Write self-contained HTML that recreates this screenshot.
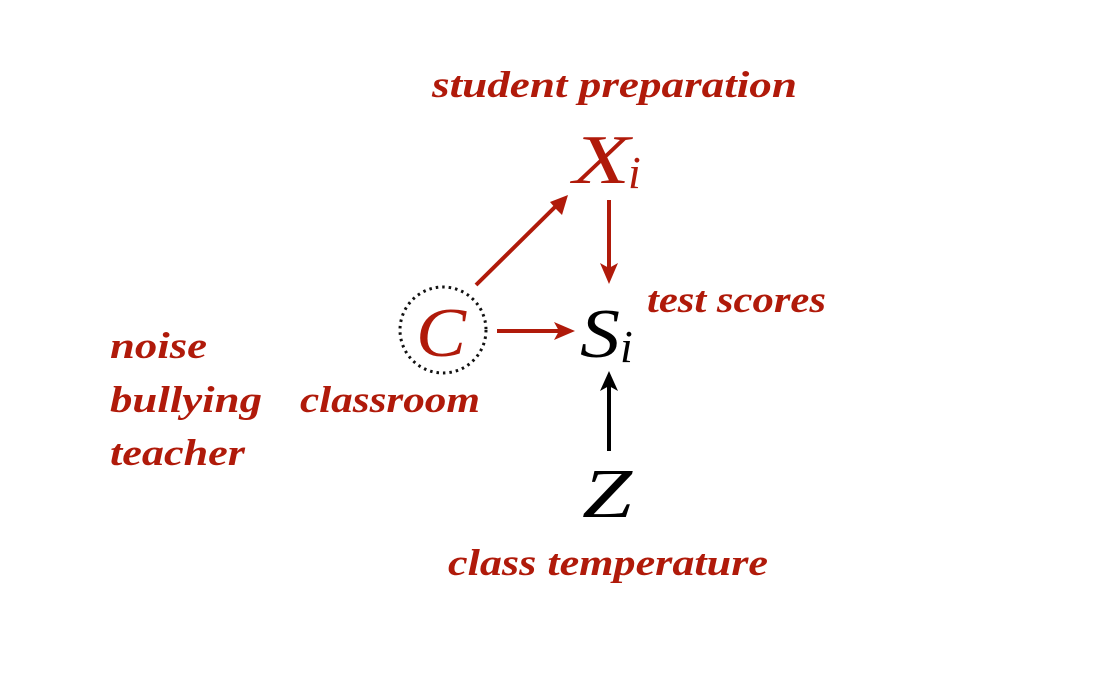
<!DOCTYPE html>
<html><head><meta charset="utf-8"><style>
html,body{margin:0;padding:0;background:#fff;}
svg{display:block;}
.l{font-family:"Liberation Serif",serif;font-style:italic;font-weight:bold;fill:#b01a0a;font-size:37px;}
.m{font-family:"Liberation Serif",serif;font-style:italic;font-size:70px;}
.s{font-family:"Liberation Serif",serif;font-style:italic;font-size:46px;}
</style></head><body>
<svg width="1104" height="689" viewBox="0 0 1104 689">
<text class="l" x="432" y="97" textLength="365" lengthAdjust="spacingAndGlyphs">student preparation</text>
<text class="m" x="573" y="183" fill="#b01a0a" textLength="57" lengthAdjust="spacingAndGlyphs">X</text><text class="s" x="628" y="188" fill="#b01a0a">i</text>
<text class="l" x="647" y="312" textLength="179" lengthAdjust="spacingAndGlyphs">test scores</text>
<text class="l" x="300" y="412" textLength="180" lengthAdjust="spacingAndGlyphs">classroom</text>
<text class="l" x="110" y="358" textLength="97" lengthAdjust="spacingAndGlyphs">noise</text>
<text class="l" x="110" y="412" textLength="152" lengthAdjust="spacingAndGlyphs">bullying</text>
<text class="l" x="110" y="465" textLength="135" lengthAdjust="spacingAndGlyphs">teacher</text>
<text class="l" x="448" y="575" textLength="320" lengthAdjust="spacingAndGlyphs">class temperature</text>
<circle cx="443" cy="330" r="43" fill="none" stroke="#111" stroke-width="3" stroke-dasharray="2.5 4"/>
<text class="m" x="416" y="356" fill="#b01a0a" textLength="50" lengthAdjust="spacingAndGlyphs">C</text>
<text class="m" x="580" y="357" fill="#000" textLength="40" lengthAdjust="spacingAndGlyphs">S</text><text class="s" x="620" y="362" fill="#000">i</text>
<text class="m" x="582" y="517" fill="#000" textLength="50" lengthAdjust="spacingAndGlyphs">Z</text>
<g stroke="#b01a0a" stroke-width="4">
<line x1="476" y1="285" x2="556" y2="206"/>
<line x1="609" y1="200" x2="609" y2="268"/>
<line x1="497" y1="331" x2="560" y2="331"/>
</g>
<path d="M568,195 L562,215 L556,209 L550,202 Z" fill="#b01a0a"/>
<path d="M609,284 L600,263 L609,268 L618,263 Z" fill="#b01a0a"/>
<path d="M575,331 L554,322 L559,331 L554,340 Z" fill="#b01a0a"/>
<line x1="609" y1="451" x2="609" y2="385" stroke="#000" stroke-width="4"/>
<path d="M609,371 L600,391 L609,386 L618,391 Z" fill="#000"/>
</svg>
</body></html>
